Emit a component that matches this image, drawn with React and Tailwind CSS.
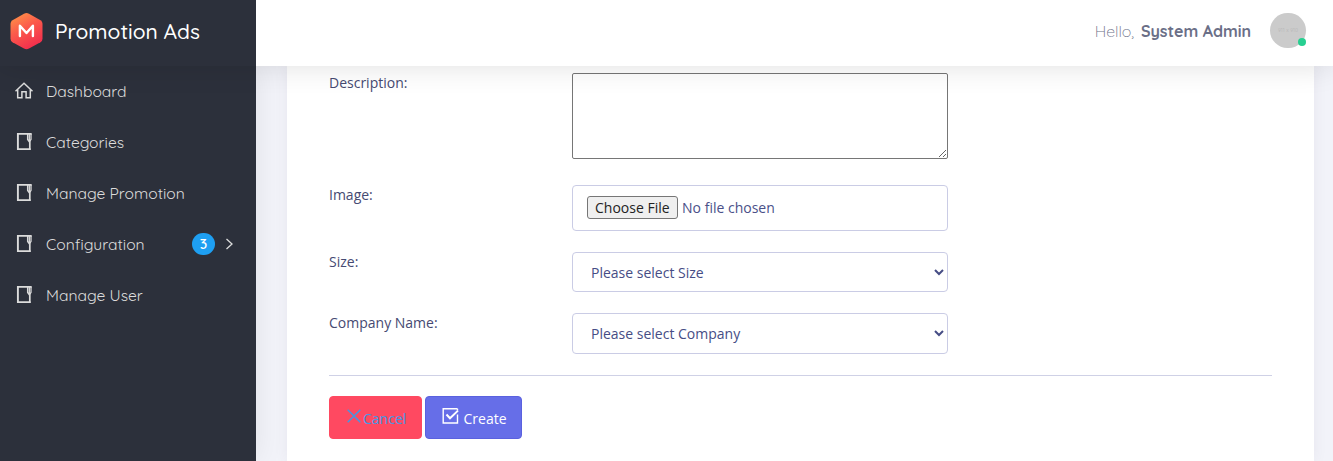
import React from "react";

const HomeIcon = () => (
  <svg width="18" height="17" viewBox="0 0 18 17" fill="none" stroke="currentColor" strokeWidth="1.5">
    <path d="M0.5 9.300 9 1.200l8.500 8.100" />
    <path d="M2.700 7.500V15.700H6.900V9.700H11.100V15.700H15.300V7.500" />
  </svg>
);

const BookIcon = () => (
  <svg width="18" height="18" viewBox="0 0 18 18" fill="none" stroke="currentColor">
    <path d="M2.900 0V17" strokeWidth="1.900" />
    <path d="M2 .9H16.700M2 16.200H15.600" strokeWidth="1.800" />
    <path d="M14.800 7V17" strokeWidth="1.700" />
    <path d="M12.600 1V6.500L14.200 8.600 16 6.500V1M14.300 1V7" strokeWidth="1.300" />
  </svg>
);

const Logo = () => (
  <svg width="33" height="37" viewBox="0 0 33 37">
    <defs>
      <linearGradient id="logoFill" x1="0.150" y1="0" x2="0.650" y2="1">
        <stop offset="0" stopColor="#ff9447" />
        <stop offset="0.450" stopColor="#fb5a4b" />
        <stop offset="1" stopColor="#f22c4d" />
      </linearGradient>
    </defs>
    <path
      fill="url(#logoFill)"
      d="M14 .7Q16.500-.6 19 .7L30.500 7.200Q32.500 8.400 32.500 10.800V25.700Q32.500 28.100 30.500 29.300L19 35.600Q16.500 36.900 14 35.600L2.500 29.300Q.5 28.100 .5 25.700V10.800Q.5 8.400 2.500 7.200Z"
    />
    <path d="M9.900 23V12.700L16.500 20 22.900 12.700V23" fill="none" stroke="#fff" strokeWidth="2.400" strokeLinejoin="round" strokeLinecap="round" />
  </svg>
);

const menu = [
  { label: "Dashboard", icon: HomeIcon },
  { label: "Categories", icon: BookIcon },
  { label: "Manage Promotion", icon: BookIcon },
  { label: "Configuration", icon: BookIcon, count: 3 },
  { label: "Manage User", icon: BookIcon },
];

function Header() {
  return (
    <header className="relative z-20 flex h-[66px] shrink-0 bg-white font-['Quicksand','Lato',sans-serif] shadow-[0_0_30px_rgba(0,0,0,0.13)]">
      <div className="flex w-[256px] items-center bg-[#2c303b] pb-[3px] pl-[10px] text-white">
        <Logo />
        <span className="ml-3 whitespace-nowrap pb-[2px] text-[21px] font-medium leading-7">Promotion Ads</span>
      </div>
      <div className="flex flex-1 items-center justify-end pr-[27px] pb-[5px] text-[#6b6f87]">
        <span className="mr-[7px] pt-[2px] text-[16px] font-light">Hello,</span>
        <span className="mr-[19px] whitespace-nowrap pt-[2px] text-[16px] font-bold">System Admin</span>
        <div className="relative flex h-[35px] w-9 items-center justify-center rounded-full bg-[#cbcbcb]">
          <span className="text-[5px] leading-none tracking-[0.1px] text-[#b5b5b5]">911 x 910</span>
          <span className="absolute right-0 bottom-[2px] size-2 rounded-full bg-[#27cf91]" />
        </div>
      </div>
    </header>
  );
}

function Sidebar() {
  return (
    <nav className="relative z-10 w-[256px] shrink-0 bg-[#2c303b] font-['Quicksand','Lato',sans-serif] text-[#dcdcdc] shadow-[0_0_28px_rgba(0,0,0,0.08)]">
      {menu.map(({ label, icon: Icon, count }) => (
        <a key={label} className="flex h-[51px] items-center pl-[15px]">
          <span className="flex w-[31px] pb-[2px]"><Icon /></span>
          <span className="whitespace-nowrap pb-px text-[15.65px]">{label}</span>
          {count && (
            <span className="mr-[22px] ml-auto flex items-center gap-[10px] pb-[2px]">
              <span className="flex h-[22px] w-[23px] items-center justify-center rounded-full bg-[#1e9ff2] text-[14px] font-semibold text-white">{count}</span>
              <svg className="mt-px" width="9" height="12" viewBox="0 0 9 12" fill="none" stroke="currentColor" strokeWidth="1.300"><path d="M1.500 1 7 6 1.500 11" /></svg>
            </span>
          )}
        </a>
      ))}
    </nav>
  );
}

function Row({ label, className, children }) {
  return (
    <div className={"flex items-start " + className}>
      <label className="w-[243px] leading-5 text-[#464a72]">{label}</label>
      {children}
    </div>
  );
}

export default function App() {
  return (
    <div className="flex h-[461px] w-full flex-col overflow-hidden bg-[#f2f3f9] font-['Open_Sans',sans-serif] text-sm">
      <Header />
      <div className="flex min-h-0 flex-1">
        <Sidebar />
        <main className="flex-1 pr-[19px] pl-[31px]">
          <section className="h-full bg-white px-[42px] pt-[7px] shadow-[0_0_13px_rgba(82,63,105,0.07)]">
            <Row label="Description:" className="h-[112px]">
              <textarea className="block h-[86px] w-[376px] resize rounded-[2px] border border-[#767676] bg-white" />
            </Row>
            <Row label="Image:" className="h-[67px]">
              <input
                type="file"
                className="block h-[46px] w-[376px] rounded-[4px] border border-[#cacce5] px-[14px] py-[10px] text-[#4a5089] file:mr-[4.500px] file:h-[23px] file:rounded-[3px] file:border file:border-solid file:border-[#767676] file:bg-[#efefef] file:px-[7px] file:text-[#222]"
              />
            </Row>
            <Row label="Size:" className="h-[61px]">
              <select className="h-[40px] w-[376px] rounded-[4px] border border-[#cacce5] bg-white px-[14px] text-[#464d85]">
                <option>Please select Size</option>
              </select>
            </Row>
            <Row label="Company Name:" className="h-[62px]">
              <select className="h-[41px] w-[376px] rounded-[4px] border border-[#cacce5] bg-white px-[14px] text-[#464d85]">
                <option>Please select Company</option>
              </select>
            </Row>
            <hr className="mb-5 border-t border-[#cfd1e6]" />
            <div className="flex gap-[3px]">
              <button className="flex h-[43px] w-[93px] items-center rounded-[4px] border border-[#ff4961] bg-[#ff4961] pl-[17px] text-[#4398e4]">
                <svg className="mb-1" width="14" height="14" viewBox="0 0 14 14" fill="none" stroke="currentColor" strokeWidth="1.500"><path d="M.7.7 13.300 13.300M13.300.7.7 13.300" /></svg>
                <span className="ml-[2px] pt-[3px]">Cancel</span>
              </button>
              <button className="flex h-[43px] w-[97px] items-center rounded-[4px] border border-[#5a61df] bg-[#666ee8] pl-4 text-white">
                <svg className="mb-[3px]" width="18" height="16" viewBox="0 0 18 16" fill="none" stroke="currentColor" strokeWidth="1.400"><path d="M15.500.8H1.200V15H15.500V6.500M15.500.8V2.500" /><path d="M4.500 6.500 8 10.300 16 2.600" strokeWidth="2" /></svg>
                <span className="ml-[3.500px] pt-[3px] font-medium">Create</span>
              </button>
            </div>
          </section>
        </main>
      </div>
    </div>
  );
}
